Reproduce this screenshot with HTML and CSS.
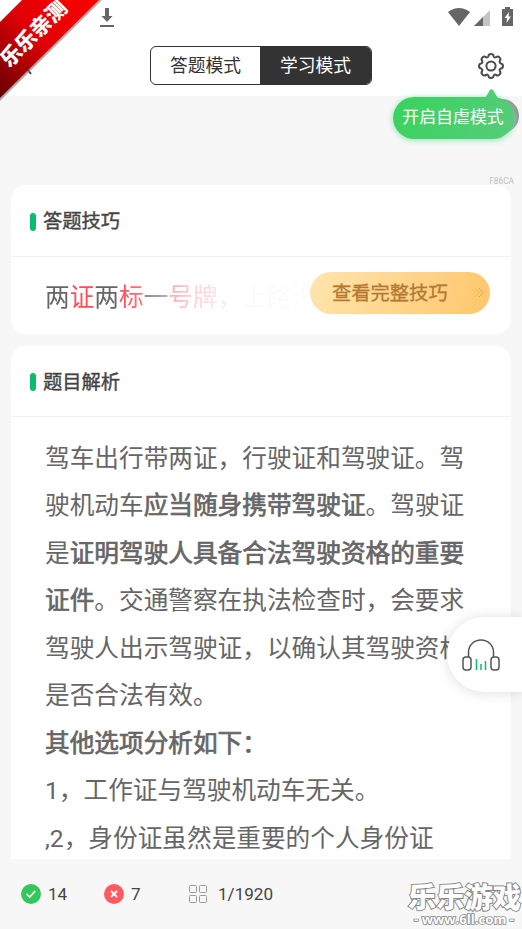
FILE: index.html
```html
<!DOCTYPE html>
<html lang="zh-CN">
<head>
<meta charset="utf-8">
<title>学习模式</title>
<link rel="stylesheet" href="styles.css">
</head>
<body>
<div class="app">
  <header class="header">
    <div class="status">
      <svg class="download" width="14" height="19" viewBox="0 0 14 19"><path d="M5 0h4v8h3.500L7 14 1.500 8H5zM0 17h14v2H0z" fill="#666"/></svg>
      <div class="system">
        <svg width="22" height="18" viewBox="0 0 22 18"><path d="M0 4Q11-4 22 4L11 18z" fill="#666"/></svg>
        <svg width="16" height="16" viewBox="0 0 16 16"><path d="M0 16L16 0v16z" fill="#c4c4c4"/><path d="M0 16l9-9v9z" fill="#666"/></svg>
        <svg width="11" height="19" viewBox="0 0 11 19"><path d="M3 0h5v2h3v17H0V2h3z" fill="#666"/><path d="M7 5L2.500 11H5l-.5 5L9 9.500H6.500z" fill="#fff"/></svg>
      </div>
    </div>
    <div class="toolbar">
      <svg class="back" width="10" height="20" viewBox="0 0 10 20"><path d="M9 1L1 10l6 8" fill="none" stroke="#444" stroke-width="2"/></svg>
      <div class="tabs"><span class="tab">答题模式</span><span class="tab active">学习模式</span></div>
      <svg class="gear" width="26" height="26" viewBox="0 0 26 26" fill="none" stroke="#4a4a4a" stroke-width="2" stroke-linejoin="round"><path d="M10.400 3.200C10.800 .3 15.200 .3 15.600 3.200Q16.200 5 18.100 4.100C20.500 2.300 23.600 5.400 21.900 7.900Q21 9.700 22.800 10.400C25.700 10.800 25.700 15.200 22.800 15.600Q21 16.300 21.900 18.100C23.600 20.600 20.500 23.700 18.100 21.900Q16.200 21 15.600 22.800C15.200 25.700 10.800 25.700 10.400 22.800Q9.800 21 7.900 21.900C5.500 23.700 2.400 20.600 4.100 18.100Q5 16.300 3.200 15.600C.3 15.200 .3 10.800 3.200 10.400Q5 9.700 4.100 7.900C2.400 5.400 5.500 2.300 7.900 4.100Q9.800 5 10.400 3.200Z"/><circle cx="13" cy="13" r="4.600"/></svg>
    </div>
    <div class="ribbon"><svg width="102" height="102" viewBox="0 0 102 102">
      <defs><linearGradient id="red" x1="0" y1="1" x2="1" y2="0"><stop offset="0" stop-color="#650000"/><stop offset=".5" stop-color="#df0007"/><stop offset="1" stop-color="#ff0000"/></linearGradient></defs>
      <path d="M0 101L102 0H23L0 23z" fill="#777" opacity=".6"/><path d="M0 98L99 0H22L0 22z" fill="url(#red)"/>
      <text class="ribbon-text" x="32.500" y="32.500" text-anchor="middle" dominant-baseline="central" transform="rotate(-45 32.500 32.500)">乐乐亲测</text>
    </svg></div>
    <div class="peek"></div>
    <div class="tip">开启自虐模式</div>
  </header>

  <main class="content">
    <div class="code">F86CA</div>
    <section class="card skill">
      <h2 class="title">答题技巧</h2>
      <div class="preview">
        <div class="phrase">两<em>证</em>两<em>标</em>一<em>号牌</em>，上路没</div>
        <div class="more">查看完整技巧<svg width="15" height="12" viewBox="0 0 15 12" fill="none" stroke="#c98b3b"><path d="M1 2l4 4.500L1 11" opacity=".12"/><path d="M5 2l4 4.500L5 11" opacity=".35"/><path d="M9 2l4 4.500L9 11" opacity=".6"/></svg></div>
      </div>
    </section>
    <section class="card analysis">
      <h2 class="title">题目解析</h2>
      <div class="article">
        <p>驾车出行带两证，行驶证和驾驶证。驾<br>驶机动车<b>应当随身携带驾驶证</b>。驾驶证<br>是<b>证明驾驶人具备合法驾驶资格的重要<br>证件</b>。交通警察在执法检查时，会要求<br>驾驶人出示驾驶证，以确认其驾驶资格<br>是否合法有效。</p>
        <p><b>其他选项分析如下：</b></p>
        <p>1，工作证与驾驶机动车无关。</p>
        <p>,2，身份证虽然是重要的个人身份证</p>
      </div>
    </section>
  </main>

  <footer class="footer">
    <div class="stat right"><svg width="20" height="20" viewBox="0 0 20 20"><circle cx="10" cy="10" r="10" fill="#34c759"/><path d="M5.500 10l3.200 3 5.500-6" fill="none" stroke="#fff" stroke-width="1.700"/></svg>14</div>
    <div class="stat wrong"><svg width="20" height="20" viewBox="0 0 20 20"><circle cx="10" cy="10" r="10" fill="#ff5a5f"/><path d="M7 7l6 6M13 7l-6 6" stroke="#fff" stroke-width="1.800"/></svg>7</div>
    <div class="stat page"><svg width="18" height="18" viewBox="0 0 18 18" fill="none" stroke="#999"><rect x=".5" y=".5" width="7" height="7" rx="1"/><rect x="10.500" y=".5" width="7" height="7" rx="1"/><rect x=".5" y="10.500" width="7" height="7" rx="1"/><rect x="10.500" y="10.500" width="7" height="7" rx="1"/></svg>1/1920</div>
    <svg class="brand" width="116" height="52" viewBox="0 0 116 52">
      <text class="brand-name" x="2" y="30.500" textLength="113" lengthAdjust="spacingAndGlyphs">乐乐游戏</text>
      <text class="brand-url" x="8" y="47" textLength="100" lengthAdjust="spacingAndGlyphs">- www.6ll.com -</text>
    </svg>
  </footer>

  <div class="audio"><svg width="38" height="32" viewBox="0 0 38 32" fill="none" stroke="#555" stroke-width="1.500"><path d="M6.500 18V13a12.500 12 0 0 1 25 0v5"/><rect x="1" y="18" width="8" height="13" rx="3"/><rect x="29" y="18" width="8" height="13" rx="3"/><path d="M14.500 20v11M19 25v6M23.500 22v9" stroke="#0bbb70"/></svg></div>
</div>
</body>
</html>
```
FILE: styles.css
```css
* { box-sizing: border-box; }
body { margin: 0; font-family: Roboto, "Noto Sans CJK SC", sans-serif; color: #666; background: #f7f7f7; }
svg { display: block; flex-shrink: 0; }
.app { position: relative; width: 522px; height: 929px; display: flex; flex-direction: column; overflow: hidden; }
.header { position: relative; z-index: 2; height: 96px; background: #fff; flex-shrink: 0; }
.status { display: flex; justify-content: space-between; height: 36px; padding: 8px 9px 0 100px; }
.system { display: flex; gap: 4px; }
.system svg:nth-child(2) { margin-top: 2px; }
.system svg:nth-child(3) { margin: -1px 0 0 8px; }
.toolbar { display: flex; align-items: center; height: 59px; padding: 0 18px 0 24px; justify-content: space-between; }
.tabs { display: flex; width: 222px; height: 39px; margin-left: 116px; margin-right: auto; border: 1px solid #333; border-radius: 6px; overflow: hidden; }
.tab { width: 109px; line-height: 37px; text-align: center; font-size: 17.8px; color: #333; }
.active { width: 111px; color: #fff; background: #333; }
.ribbon { position: absolute; left: 0; top: 0; }
.ribbon-text { font: 900 21px "Noto Sans CJK SC", sans-serif; fill: #fff; }
.peek { position: absolute; left: 485px; top: 99px; width: 34px; height: 34px; border-radius: 17px; background: #8b9690; }
.tip { position: absolute; left: 392.5px; top: 97px; width: 121px; height: 42px; border-radius: 21px; background: linear-gradient(120deg, #37d45c, #58cb7b); color: #fff; font-size: 16.9px; line-height: 41px; text-align: center; white-space: nowrap; box-shadow: 0 1px 6px #87e5ae; }
.tip::before { content: ""; position: absolute; left: 92px; top: -8px; width: 14px; height: 10px; background: #50ce72; clip-path: polygon(0 100%, 38% 12%, 50% 0, 62% 12%, 100% 100%); }
.content { height: 763px; padding: 89px 11px 0; display: flex; flex-direction: column; gap: 12px; overflow: hidden; position: relative; flex-shrink: 0; }
.code { position: absolute; right: 8px; top: 80px; font-size: 8.3px; line-height: 10px; color: #c0c0c0; }
.card { flex-shrink: 0; background: #fff; border-radius: 15px; }
.skill { height: 149px; }
.analysis { height: 600px; }
.title { display: flex; align-items: center; gap: 7px; height: 72px; margin: 0; padding: 0 0 1px 19px; border-bottom: 1px solid #f2f2f2; font-size: 19.3px; font-weight: 400; color: #444; -webkit-text-stroke: .4px #444; }
.analysis .title { height: 71px; }
.title::before { content: ""; width: 6px; height: 18px; border-radius: 3px; background: #0bbb70; margin-top: 3px; }
.preview { display: flex; align-items: center; justify-content: space-between; height: 77px; padding: 0 21px 6px 34px; }
.phrase { width: 265px; font-size: 24.67px; white-space: nowrap; overflow: hidden; -webkit-mask-image: linear-gradient(90deg, #000 28%, rgba(0,0,0,.35) 52%, rgba(0,0,0,.03) 72%, rgba(0,0,0,.02)); mask-image: linear-gradient(90deg, #000 28%, rgba(0,0,0,.35) 52%, rgba(0,0,0,.03) 72%, rgba(0,0,0,.02)); margin-top: 4px; }
.phrase em { font-style: normal; color: #ff4d55; }
.more { display: flex; align-items: center; justify-content: space-between; width: 180px; height: 42px; padding: 0 5px 1px 22px; border-radius: 21px; background: linear-gradient(110deg, #ffe5ad, #ffc66b); color: #b5782f; font-size: 19.3px; -webkit-text-stroke: .3px #b5782f; flex-shrink: 0; }
.article { padding: 18px 0 0 34px; font-size: 24.67px; line-height: 47.45px; white-space: nowrap; }
.article p { margin: 0; }
.article b { font-weight: 400; -webkit-text-stroke: .7px #666; }
.footer { position: relative; display: flex; height: 70px; flex-shrink: 0; padding-left: 21px; background: #f7f7f7; color: #444; font-size: 17.1px; }
.stat { display: flex; align-items: center; gap: 7px; height: 70px; }
.right { width: 83px; }
.wrong { width: 85px; }
.page { gap: 11px; }
.brand { position: absolute; left: 406px; top: 18px; }
.brand-name { font: 900 28px "Noto Sans CJK SC", sans-serif; fill: #fff; stroke: #888; stroke-width: 2px; paint-order: stroke; }
.brand-url { font: 700 12px "Open Sans", sans-serif; fill: #fff; stroke: #888; stroke-width: 1.5px; paint-order: stroke; }
.audio { position: absolute; z-index: 3; right: 0; top: 617px; width: 75px; height: 75px; padding: 22px 0 0 15px; border-radius: 38px 0 0 38px; background: #fff; box-shadow: 0 1px 14px rgba(0,0,0,.13); }
```
